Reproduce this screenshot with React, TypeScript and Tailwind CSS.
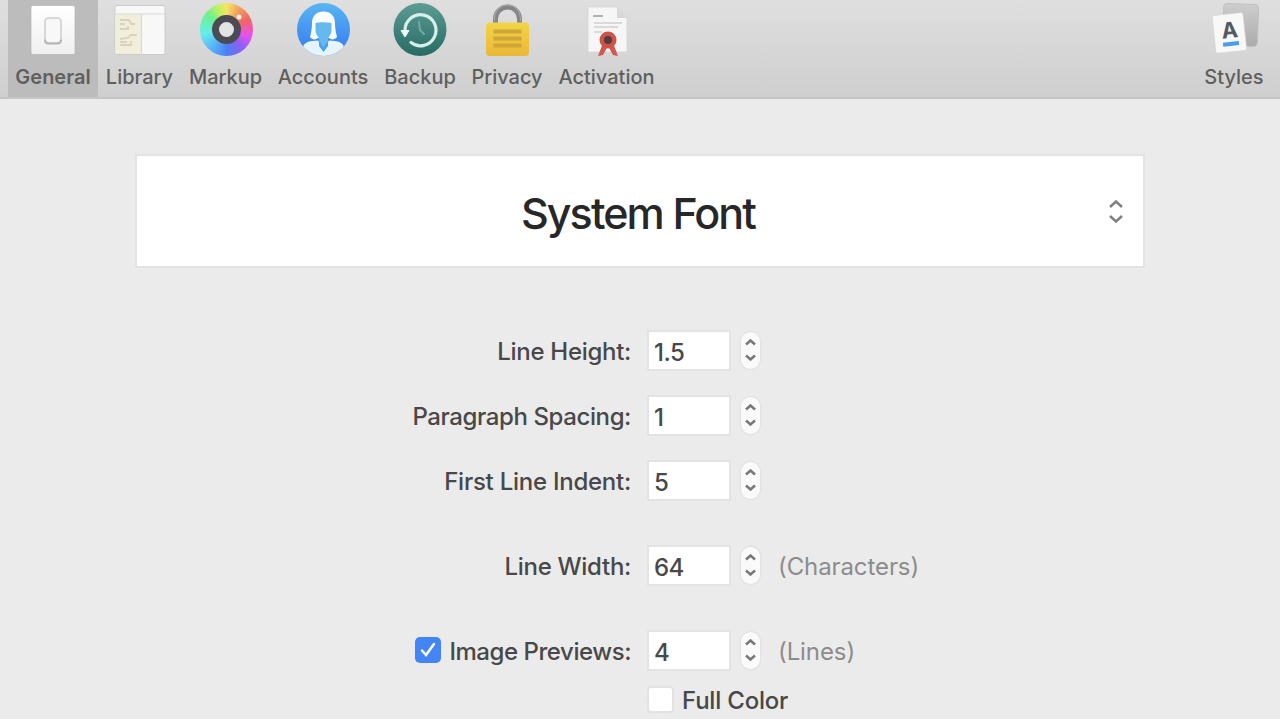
import type { ReactNode } from "react";

function GeneralIcon() {
  return (
    <svg width="56" height="56" viewBox="0 0 56 56">
      <defs>
        <linearGradient id="plate" x1="0" y1="0" x2="0" y2="1">
          <stop offset="0" stopColor="#fff" />
          <stop offset="1" stopColor="#f0f0f0" />
        </linearGradient>
      </defs>
      <rect x="6" y="4.500" width="44" height="49" rx="2" fill="url(#plate)" stroke="#b4b4b4" strokeWidth="0.7" />
      <rect x="20" y="17" width="16" height="25" rx="3.5" fill="#f8f8f8" stroke="#d8d8d8" strokeWidth="2" />
      <path d="M20 38.500q0 4 3.500 4h9q3.500 0 3.500-4" fill="none" stroke="#b4b4b4" strokeWidth="2" />
    </svg>
  );
}

function LibraryIcon() {
  return (
    <svg width="56" height="56" viewBox="0 0 56 56">
      <rect x="3" y="4.500" width="50" height="49" rx="2" fill="#f8f8f8" stroke="#c4c4c4" strokeWidth="0.8" />
      <path d="M3.500 13H29v40H3.500z" fill="#f1eedb" />
      <path d="M3 13h50M29.500 13v40.500" stroke="#d9d9d6" strokeWidth="1.200" />
      <path d="M8 19h9l2 4h4M8 28h8v-3M8 38l8-1 3-3h6M8 44h11v-4M8 23h5M8 41h7" fill="none" stroke="#d8d3bf" strokeWidth="1.800" />
    </svg>
  );
}

function MarkupIcon() {
  return (
    <div className="relative left-px h-[53px] w-[53px] rounded-full bg-[conic-gradient(#f5e565,#f09a60_35deg,#ee6762_65deg,#f05ba7_85deg,#e851ee_105deg,#8a60f4_140deg,#4d7ff7_180deg,#5ab5f8_220deg,#65eded_260deg,#6df18b_310deg,#c7ee62_340deg,#f5e565)]">
      <svg className="absolute inset-0" width="53" height="53" viewBox="0 0 53 53">
        <circle cx="26.500" cy="26.500" r="11" fill="#e3e3e3" stroke="#4b4b53" strokeWidth="7" />
        <circle cx="39" cy="14" r="2.500" fill="#fff" fillOpacity="0.85" />
      </svg>
    </div>
  );
}

function AccountsIcon() {
  return (
    <svg width="56" height="56" viewBox="0 0 56 56">
      <defs>
        <linearGradient id="accountBlue" x1="0" y1="0" x2="0" y2="1">
          <stop offset="0" stopColor="#58b5f2" />
          <stop offset="1" stopColor="#3478f0" />
        </linearGradient>
        <clipPath id="accountDisc"><circle cx="28.500" cy="28.500" r="26.500" /></clipPath>
      </defs>
      <circle cx="28.500" cy="28.500" r="26.500" fill="url(#accountBlue)" />
      <g clipPath="url(#accountDisc)">
        <path d="M15 36c1-4 2-8 2-14 0-7 4.500-11.500 11.500-11.500S40 15 40 22c0 6 1 10 2 14-2 3-6 3-8 1H23c-2 2-6 2-8-1Z" fill="#fafdff" />
        <path d="M8 56V46c1-4 5-5.500 9-6l6-.500 5.500 8 5.500-8 6 .500c4 .500 8 2 9 6v10Z" fill="#e4f5ff" />
        <path d="M20.500 22c4-1 10-1 16 0v7c0 4-2 6-3.500 8v4l-4.500 6-4.500-6v-4c-1.500-2-3.500-4-3.500-8Z" fill="#66b9ef" />
        <path d="M24 40l4.500 6 4.500-6v5l-4.500 6-4.500-6Z" fill="#4aa0f2" />
      </g>
    </svg>
  );
}

function BackupIcon() {
  return (
    <svg width="56" height="56" viewBox="0 0 56 56">
      <defs>
        <linearGradient id="backupGreen" x1="0" y1="0" x2="0" y2="1">
          <stop offset="0" stopColor="#5b9c93" />
          <stop offset="1" stopColor="#286b65" />
        </linearGradient>
      </defs>
      <circle cx="28" cy="28.500" r="26.500" fill="url(#backupGreen)" />
      <path d="M13 29a15.500 15.500 0 1 1 6 12.500" fill="none" stroke="#d7efea" strokeWidth="3.200" strokeLinecap="round" />
      <path d="M9 29.500h8L13 36Z" fill="#eefaf7" stroke="#eefaf7" strokeLinejoin="round" />
      <path d="M27 21l1 8 4 4" fill="none" stroke="#74aaa3" strokeWidth="2" strokeLinecap="round" />
    </svg>
  );
}

function PrivacyIcon() {
  return (
    <svg width="56" height="56" viewBox="0 0 56 56">
      <defs>
        <linearGradient id="lockGold" x1="0" y1="0" x2="0" y2="1">
          <stop offset="0" stopColor="#f3d447" />
          <stop offset="1" stopColor="#eab738" />
        </linearGradient>
      </defs>
      <path d="M16.500 24v-6a12 12 0 0 1 24 0v6" fill="none" stroke="#85868a" strokeWidth="5" />
      <path d="M15.500 20v-3a13 13 0 0 1 26 0v3" fill="none" stroke="#aaa" strokeWidth="1" />
      <rect x="7" y="21.500" width="43" height="33.500" rx="4" fill="url(#lockGold)" />
      <path d="M14.500 30.500h28M14.500 37.500h28M14.500 44.500h28" stroke="#cfa535" strokeWidth="4" />
    </svg>
  );
}

function ActivationIcon() {
  return (
    <svg width="56" height="56" viewBox="0 0 56 56">
      <path d="M9 6h29l10 11v34H9Z" fill="#f6f6f6" stroke="#d4d4d4" strokeWidth="0.800" />
      <path d="M38 6v11h10Z" fill="#d8d8d8" />
      <path d="M15 22h28M15 26h24M15 31h8" stroke="#d9d9d9" strokeWidth="1.800" />
      <path d="M14 15h10" stroke="#aaa" strokeWidth="1.800" />
      <path d="M24 42l-5 13 5-1 5-9 5 9 5 1-5-13Z" fill="#cf584f" />
      <circle cx="29" cy="39" r="8.500" fill="#cf5248" />
      <circle cx="29" cy="39" r="4" fill="#543a3e" />
    </svg>
  );
}

function StylesIcon() {
  return (
    <svg width="56" height="56" viewBox="0 0 56 56">
      <defs>
        <linearGradient id="backCard" x1="0" y1="0" x2="0" y2="1">
          <stop offset="0" stopColor="#cdcdcd" />
          <stop offset="1" stopColor="#ababab" />
        </linearGradient>
      </defs>
      <rect x="17" y="3" width="35" height="42" rx="4" fill="url(#backCard)" stroke="#c0c0c0" transform="rotate(2 35 25)" />
      <g transform="rotate(-6 23 33)">
        <rect x="8" y="13" width="31" height="38" rx="2" fill="#f8f8f8" stroke="#d5d5d5" strokeWidth="0.700" />
        <text x="24" y="37" textAnchor="middle" fontFamily="Inter, sans-serif" fontWeight="700" fontSize="22" fill="#55585c">A</text>
        <path d="M16 43h16" stroke="#4b9bed" strokeWidth="4" />
      </g>
    </svg>
  );
}

function ToolbarItem({ label, icon, className }: { label: string; icon: ReactNode; className: string }) {
  return (
    <button className={`flex h-[97px] shrink-0 flex-col items-center text-[20px] leading-[24px] text-[#5f5f5f] ${className}`}>
      <span className="flex h-[58px] items-center justify-center">{icon}</span>
      <span className="mt-[7px] whitespace-nowrap">{label}</span>
    </button>
  );
}

function Chevrons({ width, gap, className }: { width: number; gap: number; className: string }) {
  const half = width / 2;
  const height = gap + 2;
  return (
    <svg className={className} width={width + 2} height={height} viewBox={`${-half - 1} 0 ${width + 2} ${height}`}>
      <path
        d={`M${-half} ${half + 1}L0 1.500L${half} ${half + 1}M${-half} ${height - half - 1}L0 ${height - 1.5}L${half} ${height - half - 1}`}
        fill="none"
        stroke="currentColor"
        strokeWidth="2.500"
      />
    </svg>
  );
}

interface FieldProps {
  label: string;
  value: string;
  labelClass: string;
  rowClass?: string;
  hint?: string;
  checked?: boolean;
}

function FieldRow({ label, value, labelClass, rowClass = "", hint, checked }: FieldProps) {
  return (
    <div className={`flex h-[40px] items-center ${rowClass}`}>
      <div className="flex w-[631px] shrink-0 items-center justify-end">
        {checked && (
          <span className="mr-[8px] flex size-[26px] items-center justify-center rounded-[5px] bg-[#4385f5]">
            <svg width="18" height="18" viewBox="0 0 18 18">
              <path d="M3 9.500L7 14L15 3" fill="none" stroke="white" strokeWidth="2.500" strokeLinecap="round" />
            </svg>
          </span>
        )}
        <span className={`pt-[4px] font-medium whitespace-nowrap ${labelClass}`}>{label}</span>
      </div>
      <div className="ml-[16px] flex h-[41px] w-[84px] items-center border-2 border-[#e3e3e3] bg-white pt-[6px] pl-[5px] font-medium tracking-[-0.500px]">{value}</div>
      <div className="ml-[10px] flex h-[37px] w-[19px] items-center justify-center rounded-[9px] bg-[#fafafa] shadow-[0_0_2px_#c8c8c8]">
        <Chevrons width={9} gap={20} className="text-[#777]" />
      </div>
      {hint && <span className="ml-[18px] pt-[3px] tracking-[-0.100px] whitespace-nowrap text-[#8c8c8c]">{hint}</span>}
    </div>
  );
}

export default function App() {
  return (
    <main className="h-[719px] w-[1280px] overflow-hidden bg-[#ebebeb] font-[Inter,sans-serif] text-[24px] text-[#484848]">
      <header className="flex h-[99px] border-b-2 border-[#c6c6c6] bg-linear-to-b from-[#dfdfdf] to-[#cfcfcf] pl-[8px]">
        <ToolbarItem label="General" icon={<GeneralIcon />} className="w-[90px] bg-[#bcbcbc] font-semibold" />
        <ToolbarItem label="Library" icon={<LibraryIcon />} className="w-[83px] font-medium" />
        <ToolbarItem label="Markup" icon={<MarkupIcon />} className="w-[89px] font-medium" />
        <ToolbarItem label="Accounts" icon={<AccountsIcon />} className="w-[106px] font-medium" />
        <ToolbarItem label="Backup" icon={<BackupIcon />} className="w-[88px] font-medium" />
        <ToolbarItem label="Privacy" icon={<PrivacyIcon />} className="w-[86px] font-medium" />
        <ToolbarItem label="Activation" icon={<ActivationIcon />} className="w-[113px] font-medium" />
        <ToolbarItem label="Styles" icon={<StylesIcon />} className="mr-[8px] ml-auto w-[76px] font-medium" />
      </header>

      <section className="mx-[135px] mt-[55px] flex h-[114px] items-center border-2 border-[#e3e3e3] bg-white pr-[20px] pl-[30px]">
        <h1 className="flex-1 pt-[4px] text-center text-[43px] font-medium leading-[54px] tracking-[-1.900px] text-[#272727]">System Font</h1>
        <Chevrons width={12} gap={21} className="text-[#808080]" />
      </section>

      <section className="pt-[62px]">
        <FieldRow label="Line Height:" value="1.5" labelClass="tracking-[-0.300px]" />
        <FieldRow label="Paragraph Spacing:" value="1" labelClass="tracking-[-0.400px]" rowClass="mt-[25px]" />
        <FieldRow label="First Line Indent:" value="5" labelClass="tracking-[-0.250px]" rowClass="mt-[25px]" />
        <FieldRow label="Line Width:" value="64" labelClass="tracking-[-0.300px]" rowClass="mt-[45px]" hint="(Characters)" />
        <FieldRow label="Image Previews:" value="4" labelClass="tracking-[-0.450px]" rowClass="mt-[45px]" hint="(Lines)" checked />
        <div className="ml-[647px] mt-[14px] flex h-[30px] items-center">
          <span className="size-[27px] rounded-[4px] border-2 border-[#e2e2e2] bg-white" />
          <span className="ml-[8px] pt-[3px] font-medium tracking-[-0.200px]">Full Color</span>
        </div>
      </section>
    </main>
  );
}
